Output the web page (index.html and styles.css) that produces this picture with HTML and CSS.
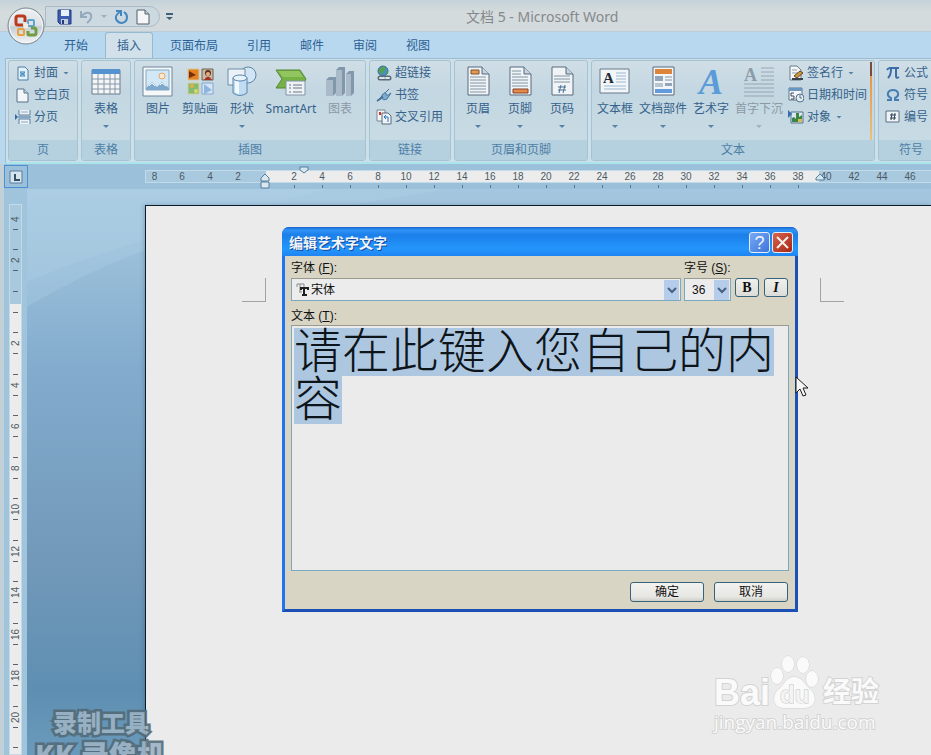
FILE: index.html
```
<!DOCTYPE html>
<html lang="zh-CN">
<head>
    <meta charset="UTF-8">
    <meta name="viewport" content="width=device-width, initial-scale=1.0">
    <title>文档 5 - Microsoft Word</title>
    <link rel="stylesheet" href="styles.css">
</head>
<body>
    <header class="titlebar">
        <button class="orb" aria-label="Office">
            <svg width="40" height="40" viewBox="0 0 40 40">
                <defs>
                    <linearGradient id="orbFill" x1="0" y1="0" x2="0" y2="1">
                        <stop offset="0" stop-color="#eef0f2"/><stop offset=".48" stop-color="#dde1e5"/>
                        <stop offset=".52" stop-color="#c6ced5"/><stop offset="1" stop-color="#f4f6f7"/>
                    </linearGradient>
                </defs>
                <circle cx="20" cy="20" r="18" fill="url(#orbFill)" stroke="#77858f"/>
                <circle cx="20" cy="20" r="16.500" fill="none" stroke="#f3f5f6"/>
                <g fill="none" stroke-width="3">
                    <path d="M17 19h-5q-2 0-2-2v-5q0-2 2-2h5q2 0 2 2v4" stroke="#b93a1c"/>
                    <rect x="22" y="14" width="6" height="6" rx="1" stroke="#5da4cf" stroke-width="2"/>
                    <rect x="12" y="23" width="6" height="6" rx="1" stroke="#e8a13c" stroke-width="2"/>
                    <path d="M22 25v3q0 1 1 1h5q2 0 2-2v-3q0-2-2-2h-3" stroke="#6f9e45"/>
                </g>
                <path d="M18 18l4 4M22 18l-4 4" stroke="#f4f0e2" stroke-width="2"/>
            </svg>
        </button>
        <div class="quick">
            <button aria-label="保存">
                <svg width="16" height="16" viewBox="0 0 16 16">
                    <path d="M1 1h13v14H3l-2-2z" fill="#3d5db2" stroke="#27397d"/>
                    <path d="M4 1h8v6H4z" fill="#e9eff8"/><path d="M4 10h7v5H4z" fill="#c5cedd"/><path d="M5 11h2v4H5z" fill="#27397d"/>
                </svg>
            </button>
            <button aria-label="撤消">
                <svg width="16" height="16" viewBox="0 0 16 16"><path d="M2 2v6h6M3 7q3-4 7-3 3 1 2 5-1 3-4 5" fill="none" stroke="#93a9bc" stroke-width="2"/></svg>
            </button>
            <i class="caret dim"></i>
            <button aria-label="恢复">
                <svg width="16" height="16" viewBox="0 0 16 16"><path d="M3 2h5v5M7 3Q2 6 3 10q2 4 6 4 5-1 5-6 0-3-3-5" fill="none" stroke="#4386bf" stroke-width="2"/></svg>
            </button>
            <button aria-label="新建">
                <svg width="16" height="16" viewBox="0 0 16 16"><path d="M2 1h8l4 4v10H2z" fill="#f4f6f7" stroke="#525e68"/><path d="M10 1v4h4" fill="#c8d2da" stroke="#525e68"/></svg>
            </button>
        </div>
        <button class="more" aria-label="自定义快速访问工具栏">
            <svg width="7" height="8" viewBox="0 0 7 8"><path d="M0 1h7" stroke="#40617c" stroke-width="2"/><path d="M0 4h7L3.500 7z" fill="#40617c"/></svg>
        </button>
        <h1>文档 5 - Microsoft Word</h1>
    </header>

    <nav class="tabs">
        <button>开始</button>
        <button class="active">插入</button>
        <button>页面布局</button>
        <button>引用</button>
        <button>邮件</button>
        <button>审阅</button>
        <button>视图</button>
    </nav>

    <section class="ribbon">
        <div class="group w-page">
            <div class="tools">
                <div class="stack">
                    <button class="small"><svg width="16" height="16" viewBox="0 0 16 16"><path d="M3 2h7l3 3v10H3z" fill="#e3f0f8" stroke="#4c7ea6"/><path d="M5 6h5v6H5z" fill="#8bbbdc"/><path d="M5 7l5 4M10 7l-5 4" stroke="#4c88b6"/></svg>封面<i class="caret"></i></button>
                    <button class="small"><svg width="16" height="16" viewBox="0 0 16 16"><path d="M2 2h7l4 4v9H2z" fill="#f3f6f8" stroke="#56708a"/><path d="M9 2v4h4" fill="#cdd9e2" stroke="#56708a"/></svg>空白页</button>
                    <button class="small"><svg width="16" height="16" viewBox="0 0 16 16"><path d="M4 1v5h11V1M4 15v-5h11v5" fill="#eef3f7" stroke="#5b7da0"/><path d="M6 3h7M6 13h7" stroke="#8aa6c0"/><path d="M3 8h13" stroke="#4775a0"/><path d="M0 5l3 3-3 3z" fill="#356a9d"/></svg>分页</button>
                </div>
            </div>
            <h2>页</h2>
        </div>

        <div class="group w-table">
            <div class="tools">
                <button class="big"><svg width="32" height="32" viewBox="0 0 32 32"><path d="M2 4h28v24H2z" fill="#f3f5f7" stroke="#667b8e"/><path d="M2 3h28v5H2z" fill="#5592d0"/><path d="M2 13h28M2 18h28M2 23h28M8 8v20M14 8v20M20 8v20M25 8v20" stroke="#8497a7"/></svg>表格<i class="caret"></i></button>
            </div>
            <h2>表格</h2>
        </div>

        <div class="group w-art">
            <div class="tools">
                <button class="big"><svg width="32" height="32" viewBox="0 0 32 32"><path d="M1 1h29v29H1z" fill="#f5f7f8" stroke="#70869a"/><path d="M4 4h23v20H4z" fill="#d2e8f7" stroke="#84a8c3"/><circle cx="20" cy="10" r="3" fill="#fbe9cf" stroke="#e3a66b"/><path d="M4 24v-2l6-6 5 5 5-5 7 6v2z" fill="#7fa9cc"/><path d="M7 20l3-3 3 3M18 19l2-2 4 3" stroke="#f5fafc" fill="none"/></svg>图片</button>
                <button class="big"><svg width="32" height="32" viewBox="0 0 32 32"><path d="M4 3h11v11H4z" fill="#e4821f" stroke="#d8c794"/><path d="M5 5l7 4-7 3z" fill="#742f12"/><path d="M18 3h11v11H18z" fill="#cbb9a0" stroke="#6f6052"/><circle cx="24" cy="7" r="3" fill="#5c3220"/><circle cx="24" cy="8" r="2" fill="#e6b187"/><path d="M20 14q4-7 8 0z" fill="#a23223"/><path d="M4 17h11v11H4z" fill="#83bb71" stroke="#d3cf97"/><circle cx="8" cy="20" r="2" fill="#e6ae43"/><circle cx="12" cy="25" r="2" fill="#dfd36e"/><path d="M18 17h11v11H18z" fill="#d5e5f5" stroke="#83a6cc"/><path d="M20 18l8 6-8 4z" fill="#8eb4e0"/></svg>剪贴画</button>
                <button class="big"><svg width="32" height="32" viewBox="0 0 32 32"><circle cx="22" cy="9" r="8" fill="#d1e5f4" stroke="#5f87a8"/><path d="M2 3h17v16H2z" fill="#eaf2f8" stroke="#6f8ca5"/><path d="M7 12v15q7 5 14 0V12" fill="#bfdcf2" stroke="#5a86ac"/><path d="M9 13v13q2 2 4 2V13z" fill="#f0f8fd"/><ellipse cx="14" cy="12" rx="7" ry="3" fill="#e6f3fc" stroke="#5a86ac"/></svg>形状<i class="caret"></i></button>
                <button class="big wide"><svg width="32" height="32" viewBox="0 0 32 32"><path d="M1 4h24l6 9-5 9H1l6-9z" fill="#76b144" stroke="#568537"/><path d="M3 5h21l4 6H8z" fill="#92c560"/><path d="M11 15h19v14H11z" fill="#eef2f5" stroke="#8094a4"/><path d="M14 19h2m2 0h9M14 22h2m2 0h9M14 26h2m2 0h9" stroke="#66798b"/></svg>SmartArt</button>
                <button class="big" disabled><svg width="32" height="32" viewBox="0 0 32 32"><path d="M2 14l3-3h7v16l-3 3H2z" fill="#8197ab"/><path d="M12 4l3-3h6v26l-3 3h-6z" fill="#8197ab"/><path d="M22 8l3-3h5v22l-3 3h-5z" fill="#8197ab"/><path d="M2 14h7v16H2zM12 4h6v26h-6zM22 8h5v22h-5z" fill="#a9bac8"/></svg>图表</button>
            </div>
            <h2>插图</h2>
        </div>

        <div class="group w-link">
            <div class="tools">
                <div class="stack">
                    <button class="small"><svg width="16" height="16" viewBox="0 0 16 16"><circle cx="7" cy="6" r="5" fill="#4b8fc4" stroke="#36709a"/><path d="M3 4l5-3 2 3-3 3-1 3-3-3zM10 6l2 1-2 3z" fill="#54a04c"/><path d="M4 13h4M10 13h3" stroke="#5b6b78" stroke-width="5" stroke-linecap="round"/><path d="M4 13h4M10 13h3" stroke="#dce5ea" stroke-width="2" stroke-linecap="round"/></svg>超链接</button>
                    <button class="small"><svg width="16" height="16" viewBox="0 0 16 16"><path d="M1 14L13 2" stroke="#466b8f"/><path d="M6 8q4-4 4-1t5-1l-4 6q-4 2-5-1z" fill="#80abd3" stroke="#46739d"/><path d="M1 14l6-4" stroke="#46739d" stroke-width="2"/></svg>书签</button>
                    <button class="small"><svg width="16" height="16" viewBox="0 0 16 16"><path d="M1 1h8v11H1z" fill="#f4f5f6" stroke="#768693"/><path d="M3 3h2v3H3z" fill="#cc3428"/><path d="M6 4h6l3 3v8H6z" fill="#eff4f8" stroke="#59687a"/><path d="M12 13V8H8m2-2L8 8l2 2" fill="none" stroke="#3071b4"/></svg>交叉引用</button>
                </div>
            </div>
            <h2>链接</h2>
        </div>

        <div class="group w-header">
            <div class="tools">
                <button class="big"><svg width="32" height="32" viewBox="0 0 32 32"><path d="M6 1h14l7 7v21H6z" fill="#f1f4f6" stroke="#566b7e"/><path d="M20 1v7h7" fill="#c6d3de" stroke="#566b7e"/><path d="M9 4h8v4H9z" fill="#e6994f" stroke="#785332"/><path d="M8 11h16M8 14h16M8 17h16M8 20h16M8 23h16M8 26h16" stroke="#8094a4"/></svg>页眉<i class="caret"></i></button>
                <button class="big"><svg width="32" height="32" viewBox="0 0 32 32"><path d="M6 1h14l7 7v21H6z" fill="#f1f4f6" stroke="#566b7e"/><path d="M20 1v7h7" fill="#c6d3de" stroke="#566b7e"/><path d="M8 5h9M8 8h9M8 11h16M8 14h16M8 17h16M8 20h16" stroke="#8094a4"/><path d="M9 23h15v4H9z" fill="#e6894a" stroke="#85432b"/></svg>页脚<i class="caret"></i></button>
                <button class="big"><svg width="32" height="32" viewBox="0 0 32 32"><path d="M6 1h14l7 7v21H6z" fill="#f1f4f6" stroke="#566b7e"/><path d="M20 1v7h7" fill="#c6d3de" stroke="#566b7e"/><path d="M8 10h16M8 13h16M8 16h16" stroke="#8094a4"/><path d="M15 19l-2 8M19 19l-2 8M12 21h8M12 24h8" stroke="#496f93"/></svg>页码<i class="caret"></i></button>
            </div>
            <h2>页眉和页脚</h2>
        </div>

        <div class="group w-text">
            <div class="tools">
                <button class="big"><svg width="32" height="32" viewBox="0 0 32 32"><path d="M1 3h29v24H1z" fill="#f3f6f8" stroke="#66798c"/><path d="M17 7h10M17 10h10M17 13h10M17 16h10M5 20h22M5 23h22" stroke="#99b7d2"/><text x="4" y="17" font-family="Liberation Serif, serif" font-size="15" font-weight="bold" fill="#222b33">A</text></svg>文本框<i class="caret"></i></button>
                <button class="big wide"><svg width="32" height="32" viewBox="0 0 32 32"><path d="M6 1h21v28H6z" fill="#f3f6f8" stroke="#566b7e"/><path d="M8 3h17v5H8z" fill="#dc8439"/><path d="M8 10h8v5H8zM18 17h7v3h-7z" fill="#91a7b9"/><path d="M18 11h7M18 14h7M8 18h8M8 20h8" stroke="#8094a4"/><path d="M8 23h17v4H8z" fill="#629bdb"/></svg>文档部件<i class="caret"></i></button>
                <button class="big"><svg class="wordart" width="32" height="32" viewBox="0 0 32 32"><text x="4" y="28" font-family="Liberation Serif, serif" font-size="36" font-style="italic" font-weight="bold" fill="#5a9bd8">A</text></svg>艺术字<i class="caret"></i></button>
                <button class="big wide" disabled><svg width="32" height="32" viewBox="0 0 32 32"><path d="M18 2h13M18 6h13M18 10h13M18 14h13M1 18h30M1 22h30M1 26h30M1 30h30" stroke="#98a6b2"/><text x="1" y="15" font-family="Liberation Serif, serif" font-size="18" font-weight="bold" fill="#8c9ba8">A</text></svg>首字下沉<i class="caret"></i></button>
                <div class="stack">
                    <button class="small"><svg width="16" height="16" viewBox="0 0 16 16"><path d="M2 1h7l4 4v10H2z" fill="#f3f5f6" stroke="#6a7a88"/><path d="M4 5h5M4 8h6" stroke="#91a1ad"/><path d="M6 11l6-5 3 2-6 5z" fill="#cb963d" stroke="#654923"/><path d="M4 14h11" stroke="#37424c" stroke-width="2"/></svg>签名行<i class="caret"></i></button>
                    <button class="small"><svg width="16" height="16" viewBox="0 0 16 16"><path d="M1 1h13v12H1z" fill="#f4f6f7" stroke="#60758a"/><path d="M1 1h13v3H1z" fill="#6996c1"/><path d="M6 6H3v3h3v3H3" fill="none" stroke="#364d65"/><circle cx="12" cy="11" r="4" fill="#e4edf4" stroke="#56708a"/><path d="M12 8v3h2" fill="none" stroke="#56708a"/></svg>日期和时间</button>
                    <button class="small"><svg width="16" height="16" viewBox="0 0 16 16"><path d="M3 3h12v11H3z" fill="#dbe8ef" stroke="#56708a"/><path d="M0 1l4 4-4 4z" fill="#356fb1"/><path d="M4 13V9l2-1 2 2V4h3v4l3-2v7z" fill="#3a8745"/><path d="M10 10h4v3h-4z" fill="#d5bd58"/></svg>对象<i class="caret"></i></button>
                </div>
                <span class="marker"></span>
            </div>
            <h2>文本</h2>
        </div>

        <div class="group w-symbol">
            <div class="tools">
                <div class="stack">
                    <button class="small"><svg width="16" height="16" viewBox="0 0 16 16"><path d="M2 5q1-2 3-2h9M6 4q0 6-3 9M11 4v7q0 3 3 1" fill="none" stroke="#3b6ea8" stroke-width="2"/></svg>公式</button>
                    <button class="small"><svg width="16" height="16" viewBox="0 0 16 16"><path d="M2 13h4v-2Q2 9 3 6q1-3 5-3t5 3q1 3-3 5v2h4" fill="none" stroke="#477bb4" stroke-width="2"/></svg>符号</button>
                    <button class="small"><svg width="16" height="16" viewBox="0 0 16 16"><path d="M1 2h13v11H1z" fill="#eff3f6" stroke="#5a6f83"/><path d="M7 4l-1 7M10 4l-1 7M5 6h6M5 9h6" stroke="#2f4357"/></svg>编号</button>
                </div>
            </div>
            <h2>符号</h2>
        </div>
    </section>

    <div class="ruler-row">
        <button class="tab-stop" aria-label="左对齐式制表符"><svg width="14" height="14" viewBox="0 0 14 14"><path d="M1 1h12v12H1z" fill="#d8e4ec" stroke="#567c9e"/><path d="M6 4v6h5" fill="none" stroke="#30506c" stroke-width="2"/></svg></button>
        <div class="ruler" id="ruler">
            <svg class="indent left" width="10" height="16" viewBox="0 0 10 16"><path d="M1 8V5l4-4 4 4v3zM1 9h8v6H1z" fill="#dce7ee" stroke="#527f9f"/></svg>
            <svg class="indent first" width="10" height="8" viewBox="0 0 10 8"><path d="M1 1h8v3L5 7 1 4z" fill="#d4e6ee" stroke="#527f9f"/></svg>
            <svg class="indent right" width="10" height="8" viewBox="0 0 10 8"><path d="M1 7V5l4-4 4 4v2z" fill="#d4e6ee" stroke="#527f9f"/></svg>
        </div>
    </div>

    <main class="workspace">
        <div class="side"><div class="vruler" id="vruler"></div></div>
        <div class="canvas">
            <svg class="swoosh" viewBox="0 0 904 567" preserveAspectRatio="none"><path d="M0 118Q60 83 118 61T420 0H0z" fill="#b9d7ea" opacity=".25"/><path d="M0 93Q60 68 118 51T300 0H0z" fill="#b9d7ea" opacity=".2"/></svg>
            <div class="page">
                <span class="corner"></span>
                <span class="corner end"></span>
            </div>
        </div>
    </main>

    <form class="dialog" onsubmit="return false">
        <div class="dialog-title">
            <strong>编辑艺术字文字</strong>
            <button type="button" class="help" aria-label="帮助">?</button>
            <button type="button" class="close" aria-label="关闭"><svg width="13" height="13" viewBox="0 0 13 13"><path d="M1 1l11 11M12 1L1 12" stroke="#f4efed" stroke-width="2"/></svg></button>
        </div>
        <div class="dialog-body">
            <div class="fields">
                <div class="field font">
                    <label for="font">字体 (<u>F</u>):</label>
                    <div class="combo">
                        <svg class="tt" width="14" height="14" viewBox="0 0 14 14"><path d="M2 4V1h7v3M5 1v8M4 9h3" fill="none" stroke="#898b8c"/><path d="M6 7V5h7v2M9 5v8M7 12h5" fill="none" stroke="#202020" stroke-width="2"/></svg>
                        <select id="font"><option>宋体</option></select>
                        <svg class="arrow" width="15" height="20" viewBox="0 0 15 20"><path d="M0 0h15v20H0z" fill="#b5cdea"/><path d="M4 8l4 4 4-4" fill="none" stroke="#45617d" stroke-width="2"/></svg>
                    </div>
                </div>
                <div class="field size">
                    <label for="size">字号 (<u>S</u>):</label>
                    <div class="combo">
                        <select id="size"><option>36</option></select>
                        <svg class="arrow" width="15" height="20" viewBox="0 0 15 20"><path d="M0 0h15v20H0z" fill="#b5cdea"/><path d="M4 8l4 4 4-4" fill="none" stroke="#45617d" stroke-width="2"/></svg>
                    </div>
                </div>
                <button type="button" class="style bold">B</button>
                <button type="button" class="style italic">I</button>
            </div>
            <label for="text">文本 (<u>T</u>):</label>
            <textarea id="text" spellcheck="false">请在此键入您自己的内容</textarea>
            <div class="actions">
                <button type="submit">确定</button>
                <button type="button">取消</button>
            </div>
        </div>
    </form>

    <svg class="cursor" width="14" height="22" viewBox="0 0 14 22"><path d="M1 1v16l4-4 3 7 3-1-3-7h5z" fill="#f5f5f5" stroke="#1b1b1b"/></svg>

    <div class="watermark">
        <div class="brand">
            <span>Bai</span>
            <svg width="50" height="54" viewBox="0 0 50 54">
                <g fill="#fafafa" stroke="#cfcfcf">
                    <ellipse cx="7" cy="21" rx="6" ry="8"/><ellipse cx="18" cy="9" rx="6" ry="8"/>
                    <ellipse cx="33" cy="10" rx="6" ry="8"/><ellipse cx="42" cy="24" rx="6" ry="8"/>
                    <path d="M24 22c-8 0-9 7-15 12C1 41 3 53 14 53h20c12 0 14-12 6-19-6-5-8-12-16-12z"/>
                </g>
                <text x="10" y="48" font-family="Liberation Sans, sans-serif" font-size="24" fill="#f4f4f4" stroke="#c2c2c2">du</text>
            </svg>
            <span class="cn">经验</span>
        </div>
        <div class="url">jingyan.baidu.com</div>
    </div>

    <div class="recorder">
        <div>录制工具</div>
        <div class="kk">KK 录像机</div>
    </div>

    <script src="script.js"></script>
</body>
</html>
```
FILE: styles.css
```
* {
    box-sizing: border-box;
}

body {
    display: flex;
    flex-direction: column;
    height: 100vh;
    margin: 0;
    overflow: hidden;
    position: relative;
    background: #b7d8ef;
    color: #35618a;
    font-family: "Noto Sans", "Noto Sans CJK SC", sans-serif;
    font-size: 12px;
    line-height: 16px;
}

button {
    margin: 0;
    padding: 0;
    border: none;
    background: none;
    color: inherit;
    font: inherit;
}

svg {
    display: block;
    flex: none;
}

.caret {
    flex: none;
    width: 6px;
    height: 3px;
    background: #5582a8;
    clip-path: polygon(0 0, 100% 0, 50% 100%);
}

.dim {
    background: #9bafbf;
}

/* title bar */
.titlebar {
    flex: none;
    display: flex;
    align-items: center;
    height: 32px;
    padding-top: 2px;
    padding-left: 45px;
    background: linear-gradient(#c4d3da, #d5dbdd 12px, #d2dadd);
    border-bottom: 1px solid #bccdd6;
}

.orb {
    position: absolute;
    left: 6px;
    top: 6px;
    z-index: 2;
}

.quick {
    display: flex;
    align-items: center;
    gap: 6px;
    width: 115px;
    height: 21px;
    padding-left: 11px;
    border: 1px solid #a9bac6;
    border-radius: 0 11px 11px 0;
    background: #ccd9e1;
}

.more {
    margin-left: 6px;
}

.titlebar h1 {
    margin: 0 0 0 293px;
    color: #85898c;
    font-size: 14px;
    font-weight: normal;
}

/* tabs */
.tabs {
    flex: none;
    display: flex;
    gap: 5px;
    height: 26px;
    padding-left: 52px;
    background: #b7d8ef;
    color: #2c6095;
}

.tabs button {
    padding: 0 11px;
    border: 1px solid transparent;
    border-bottom: none;
}

.tabs .active {
    background: #d2e1e9;
    border-color: #96b9cf;
    border-radius: 3px 3px 0 0;
}

/* ribbon */
.ribbon {
    flex: none;
    display: flex;
    gap: 3px;
    height: 106px;
    margin-left: 5px;
    padding: 1px 0 1px 2px;
    border: 1px solid #9dbdcf;
    border-right: none;
    border-bottom: 2px solid #a9e5ea;
    background: #cde0e9;
    overflow: hidden;
}

.group {
    flex: none;
    display: flex;
    flex-direction: column;
    border: 1px solid #a5c3d3;
    border-radius: 3px;
    background: linear-gradient(#d0dee6, #c3d7e2 30px, #cadde5);
    overflow: hidden;
}

.w-page { width: 70px; }
.w-table { width: 50px; }
.w-art { width: 232px; }
.w-link { width: 82px; }
.w-header { width: 134px; }
.w-text { width: 284px; }
.w-symbol { width: 66px; }

.group h2 {
    height: 20px;
    margin: 0;
    background: #b5d0df;
    color: #4d7ea5;
    font-size: 12px;
    font-weight: normal;
    line-height: 20px;
    text-align: center;
}

.tools {
    flex: 1;
    display: flex;
    padding: 1px 2px 0;
}

.big {
    display: flex;
    flex-direction: column;
    align-items: center;
    flex: none;
    width: 42px;
    padding-top: 4px;
    white-space: nowrap;
}

.w-table .big {
    width: 44px;
}

.big.wide {
    width: 54px;
}

.w-art .wide {
    width: 56px;
}

.big svg {
    margin-bottom: 3px;
}

.big .wordart {
    overflow: visible;
}

.big .caret {
    margin-top: 8px;
}

.big:disabled {
    color: #8b99a5;
}

.big:disabled .caret {
    background: #a3b1bb;
}

.stack {
    display: flex;
    flex-direction: column;
    padding-left: 4px;
}

.w-text .stack {
    padding-left: 2px;
}

.small {
    display: flex;
    align-items: center;
    gap: 3px;
    height: 22px;
    white-space: nowrap;
}

.small .caret {
    margin-left: 2px;
}

.marker {
    flex: none;
    width: 2px;
    margin-left: auto;
    background: linear-gradient(#7a4a3a 14px, #e8954a 14px, #e8c27a);
}

/* rulers */
.ruler-row {
    flex: none;
    display: flex;
    align-items: center;
    height: 25px;
    border-left: 4px solid #c2d0d8;
    background: #9bc0da;
}

.tab-stop {
    display: grid;
    place-items: center;
    width: 24px;
    height: 23px;
    border: 1px solid #4c90d3;
}

.ruler {
    position: relative;
    flex: 1;
    display: flex;
    height: 13px;
    margin-left: 117px;
    border: 1px solid #c3dae9;
    border-right: none;
    background: linear-gradient(90deg, #a9c9df 120px, #ececec 120px, #ececec 673px, #a9c9df 673px);
    color: #4c5963;
    font-family: "Liberation Sans", sans-serif;
    font-size: 10px;
    line-height: 11px;
    text-align: center;
    min-width: 0;
}

.ruler span {
    flex: none;
    width: 28px;
    height: 17px;
}

.ruler span:first-of-type {
    width: 22px;
    padding-right: 5px;
}

.ruler .tick {
    background: linear-gradient(#56748c, #56748c) center bottom / 1px 3px no-repeat;
}

.indent {
    position: absolute;
    top: 2px;
}

.left { left: 114px; }
.first { left: 153px; top: -5px; }
.right { left: 669px; }

.workspace {
    flex: 1;
    min-height: 0;
    display: flex;
    border-left: 4px solid #c2d0d8;
}

.side {
    flex: none;
    width: 23px;
    padding: 15px 5px 0;
    background: #a0c4dc;
    overflow: hidden;
}

.vruler {
    height: 100%;
    border: 1px solid #c3dae9;
    background: linear-gradient(#a9c9df 99px, #ececec 99px);
    color: #4c5963;
    font-family: "Liberation Sans", sans-serif;
    font-size: 10px;
    line-height: 11px;
    overflow: hidden;
}

.vruler span {
    display: flex;
    align-items: center;
    justify-content: center;
    width: 11px;
    height: 42px;
    writing-mode: vertical-rl;
    transform: rotate(180deg);
    background:
        linear-gradient(#56646f, #56646f) center 10px / 5px 1px no-repeat,
        linear-gradient(#56646f, #56646f) center 31px / 5px 1px no-repeat;
}

.vruler span:nth-child(even) {
    height: 41px;
}

.vruler span:first-child {
    margin-top: -7px;
    background: linear-gradient(#56646f, #56646f) center 10px / 5px 1px no-repeat;
}

.canvas {
    position: relative;
    flex: 1;
    display: flex;
    min-width: 0;
    padding: 16px 0 0 118px;
    background: linear-gradient(#a4c7df, #9bc0da 60px, #82abcd 180px, #7198b9 380px, #5e8fb2 500px, #6a9abb);
}

.swoosh {
    position: absolute;
    inset: 0;
    width: 100%;
    height: 100%;
}

.page {
    position: relative;
    flex: 1;
    display: flex;
    justify-content: space-between;
    padding: 72px 87px 0 96px;
    border: 1px solid #0d1c2b;
    border-width: 1px 0 0 1px;
    background: #ebebeb;
    box-shadow: -1px 0 4px rgba(40, 70, 100, 0.3);
}

.corner {
    width: 24px;
    height: 24px;
    border: 1px solid #a2a2a2;
    border-width: 0 1px 1px 0;
}

.end {
    border-width: 0 0 1px 1px;
}

/* WordArt dialog */
.dialog {
    position: absolute;
    left: 282px;
    top: 227px;
    z-index: 5;
    width: 516px;
    border: 3px solid #1c50b4;
    border-top: none;
    border-left-color: #2275e8;
    border-radius: 7px 7px 0 0;
    background: #d8d5c5;
    color: #111;
    font-family: "Liberation Sans", "Noto Sans CJK SC", sans-serif;
}

.dialog-title {
    display: flex;
    align-items: center;
    gap: 2px;
    height: 29px;
    margin: 0 -3px;
    padding: 2px 5px 0 7px;
    border-radius: 7px 7px 0 0;
    background: linear-gradient(#1763c9, #2f93f5 3px, #1c7fe9 8px, #2396fc 22px, #1f84f2);
    color: #f2f5f8;
    font-size: 14px;
}

.dialog-title strong {
    flex: 1;
    text-shadow: 1px 1px #15489d;
}

.dialog-title button {
    display: grid;
    place-items: center;
    width: 21px;
    height: 21px;
    border: 1px solid #e6edf5;
    border-radius: 3px;
}

.help {
    background: linear-gradient(135deg, #78a9f4, #3c75dd);
    font-size: 18px;
}

.close {
    background: linear-gradient(135deg, #d8644d, #a72615);
}

.dialog-body {
    display: flex;
    flex-direction: column;
    padding: 4px 6px 7px;
}

.fields {
    display: flex;
    align-items: flex-end;
    height: 41px;
    margin-bottom: 7px;
}

.field {
    display: flex;
    flex-direction: column;
    gap: 2px;
}

.font {
    flex: 1;
    margin-right: 3px;
}

.size {
    width: 47px;
}

.combo {
    display: flex;
    align-items: center;
    height: 23px;
    padding: 1px;
    border: 1px solid #7ba9c0;
    border-top-color: #9b9a8e;
    background: #ececec;
}

.tt {
    margin-left: 2px;
}

.combo select {
    flex: 1;
    min-width: 0;
    padding: 0 0 0 2px;
    border: none;
    outline: none;
    appearance: none;
    background: none;
    color: #111;
    font: inherit;
}

.size select {
    padding-left: 6px;
}

.style {
    align-self: flex-end;
    width: 24px;
    height: 19px;
    margin: 0 0 4px 4px;
    border: 1px solid #38627a;
    border-radius: 3px;
    background: linear-gradient(#f0f0ee, #dcdcd8);
    font-family: "Liberation Serif", serif;
    font-size: 14px;
    font-weight: bold;
}

.italic {
    margin-left: 5px;
    margin-right: 1px;
    font-style: italic;
}

/* selected text: ten characters on the first line, one on the second */
textarea {
    display: block;
    width: 100%;
    height: 246px;
    margin: 1px 0 11px;
    padding: 2px;
    border: 1px solid #7ba9c0;
    border-top-color: #9b9a8e;
    border-radius: 0;
    outline: none;
    resize: none;
    overflow: hidden;
    background:
        linear-gradient(#adc7e0, #adc7e0) 2px 2px / 10em 1em no-repeat,
        linear-gradient(#adc7e0, #adc7e0) 2px 50px / 1em 1em no-repeat,
        #ebebeb;
    color: #0d151b;
    font-family: "Liberation Sans", "Noto Sans CJK SC", sans-serif;
    font-size: 48px;
    font-weight: 300;
    line-height: 48px;
}

.actions {
    display: flex;
    justify-content: flex-end;
    gap: 10px;
    padding-right: 1px;
}

.actions button {
    width: 74px;
    height: 20px;
    border: 1px solid #38627a;
    border-radius: 3px;
    background: linear-gradient(#f2f2f0, #e6e6e3 14px, #cfcec6);
}

.cursor {
    position: absolute;
    left: 795px;
    top: 376px;
    z-index: 6;
}

/* overlays */
.watermark {
    position: absolute;
    right: 52px;
    bottom: 20px;
    color: #fafafa;
    font-family: "Open Sans", sans-serif;
    -webkit-text-stroke: 2px #d3d3d3;
    paint-order: stroke fill;
}

.brand {
    display: flex;
    align-items: flex-end;
    font-family: "Liberation Sans", "Noto Sans CJK SC", sans-serif;
    font-size: 36px;
    font-weight: bold;
    line-height: 32px;
}

.brand svg {
    -webkit-text-stroke: 0;
}

.brand .cn {
    margin-left: 3px;
    font-size: 28px;
}

.url {
    font-size: 19px;
    line-height: 26px;
}

.recorder {
    position: absolute;
    left: 35px;
    top: 706px;
    color: #9db3c4;
    font-family: "Noto Sans CJK SC", sans-serif;
    font-size: 24px;
    font-weight: 900;
    line-height: 32px;
    white-space: nowrap;
    -webkit-text-stroke: 5px #536b78;
    paint-order: stroke fill;
    opacity: 0.9;
}

.recorder div:first-child {
    padding-left: 18px;
}

.kk {
    font-size: 28px;
}
```
FILE: script.js
```
const ruler = document.getElementById('ruler');
for (let n = -8; n <= 46; n += 2) {
    const mark = document.createElement('span');
    mark.textContent = n === 0 ? '' : Math.abs(n);
    if (n > 0 && n < 40) {
        mark.className = 'tick';
    }
    ruler.appendChild(mark);
}

// the last mark is only partly visible and has no number
const vruler = document.getElementById('vruler');
for (let n = -4; n <= 22; n += 2) {
    const mark = document.createElement('span');
    mark.textContent = n === 0 || n > 20 ? '' : Math.abs(n);
    vruler.appendChild(mark);
}
```
